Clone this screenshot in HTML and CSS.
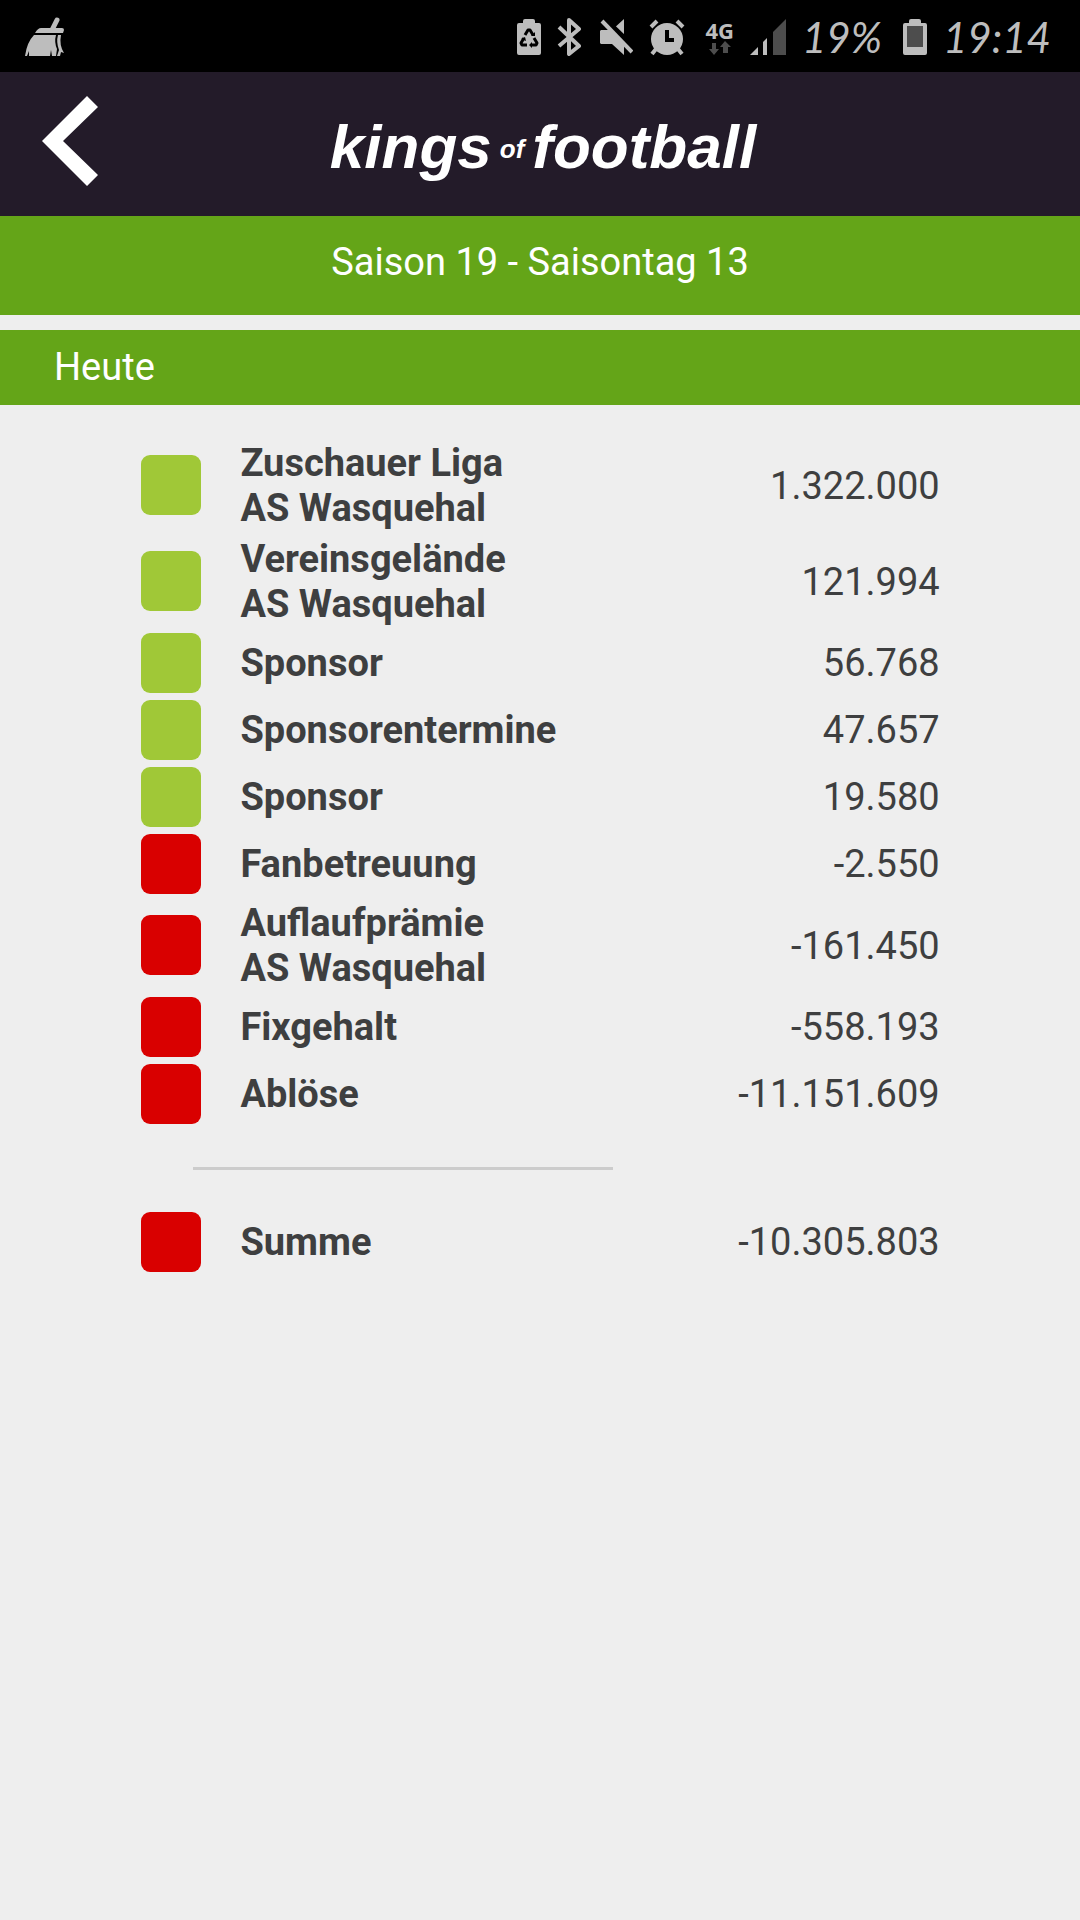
FILE: index.html
```
<!DOCTYPE html>
<html lang="de">

<head>
    <meta charset="utf-8">
    <meta name="viewport" content="width=device-width, initial-scale=1.0">
    <title>Kings of Football</title>
    <link rel="stylesheet" href="styles.css">
</head>

<body>
    <div class="statusbar">
        <svg class="broom" width="40" height="40" viewBox="0 0 40 40">
            <path d="M32 3 L27 13" stroke="#bdbdbd" stroke-width="5" stroke-linecap="round" />
            <path d="M10 16 Q13 11 16 11 H37 Q39 11 39 13 L38 16 Z" fill="#bdbdbd" />
            <path d="M9 18 H31 Q29 25 32 32 L31 39 H27 L26 33 L25 39 H4 V34 L2 39 H0 Q2 25 9 18 Z M33 18 H36 Q34 28 39 36 L36 35 L35 39 H32 L34 33 Q31 25 33 18 Z" fill="#bdbdbd" />
        </svg>
        <div class="symbole">
            <svg width="24" height="36" viewBox="0 0 24 36">
                <path d="M6 4 V2 Q6 0 8 0 H16 Q18 0 18 2 V4 H22 Q24 4 24 6 V34 Q24 36 22 36 H2 Q0 36 0 34 V6 Q0 4 2 4 Z" fill="#bdbdbd" />
                <g fill="none" stroke="#000" stroke-width="3" stroke-linejoin="round">
                    <path d="M8 16 L11 11 H13 L16 16" />
                    <path d="M7 19 L4 24 L5 26 H10" />
                    <path d="M17 19 L20 24 L19 26 H14" />
                </g>
                <path d="M14 17 H18 V13 Z M4 20 L8 18 L9 22 Z M15 23 V29 L12 26 Z" fill="#000" />
            </svg>
            <svg width="24" height="38" viewBox="0 0 24 38">
                <path d="M2 9 L22 28 L12 36 V2 L22 11 L2 28" fill="none" stroke="#bdbdbd" stroke-width="4" stroke-linejoin="round" />
            </svg>
            <svg class="stumm" width="33" height="38" viewBox="0 0 33 38">
                <path d="M1 12 H12 L24 1 V37 L12 26 H1 L0 25 V13 Z" fill="#bdbdbd" />
                <path d="M3 0 L34 30" stroke="#000" stroke-width="6" />
                <path d="M2 3 L32 34" stroke="#bdbdbd" stroke-width="4" />
            </svg>
            <svg class="wecker" width="36" height="38" viewBox="0 0 36 38">
                <circle cx="18" cy="21" r="16" fill="#bdbdbd" />
                <path d="M2 9 L8 3 M28 3 L34 9 M7 31 L3 36 M29 31 L33 36" stroke="#bdbdbd" stroke-width="4" />
                <path d="M18 12 V22 H25" fill="none" stroke="#000" stroke-width="4" />
            </svg>
            <div class="netz">
                <span>4G</span>
                <svg width="24" height="14" viewBox="0 0 24 14">
                    <path d="M4 2 H8 V8 H11 L6 14 L1 8 H4 Z M15 12 H20 V6 H23 L17 0 L12 6 H15 Z" fill="#4d4d4d" />
                </svg>
            </div>
            <svg class="signal" width="36" height="36" viewBox="0 0 36 36">
                <path d="M0 36 L8 28 V36 Z M13 36 V23 L17 19 V36 Z" fill="#bdbdbd" />
                <path d="M23 36 V13 L36 0 V36 Z" fill="#4d4d4d" />
            </svg>
            <span class="hand akku">19%</span>
            <svg width="24" height="36" viewBox="0 0 24 36">
                <path d="M6 4 V2 Q6 0 8 0 H16 Q18 0 18 2 V4 H22 Q24 4 24 6 V34 Q24 36 22 36 H2 Q0 36 0 34 V6 Q0 4 2 4 Z" fill="#bdbdbd" />
                <path d="M4 7 H20 V28 H4 Z" fill="#4d4d4d" />
            </svg>
            <time class="hand uhr">19:14</time>
        </div>
    </div>

    <header>
        <button class="zurueck" aria-label="Zurück">
            <svg width="56" height="90" viewBox="0 0 56 90">
                <path d="M45 0 L56 11 L21 45 L56 79 L45 90 L0 45 Z" fill="#fff" />
            </svg>
        </button>
        <h1>kings<small>of</small>football</h1>
    </header>

    <main>
        <h2 class="saison">Saison 19 - Saisontag 13</h2>
        <h3 class="tag">Heute</h3>

        <section class="finanzen">
            <table>
                <tbody>
                    <tr>
                        <td class="farbe"><span class="plus"></span></td>
                        <th scope="row">Zuschauer Liga<br>AS Wasquehal</th>
                        <td class="betrag">1.322.000</td>
                    </tr>
                    <tr>
                        <td class="farbe"><span class="plus"></span></td>
                        <th scope="row">Vereinsgelände<br>AS Wasquehal</th>
                        <td class="betrag">121.994</td>
                    </tr>
                    <tr>
                        <td class="farbe"><span class="plus"></span></td>
                        <th scope="row">Sponsor</th>
                        <td class="betrag">56.768</td>
                    </tr>
                    <tr>
                        <td class="farbe"><span class="plus"></span></td>
                        <th scope="row">Sponsorentermine</th>
                        <td class="betrag">47.657</td>
                    </tr>
                    <tr>
                        <td class="farbe"><span class="plus"></span></td>
                        <th scope="row">Sponsor</th>
                        <td class="betrag">19.580</td>
                    </tr>
                    <tr>
                        <td class="farbe"><span class="minus"></span></td>
                        <th scope="row">Fanbetreuung</th>
                        <td class="betrag">-2.550</td>
                    </tr>
                    <tr>
                        <td class="farbe"><span class="minus"></span></td>
                        <th scope="row">Auflaufprämie<br>AS Wasquehal</th>
                        <td class="betrag">-161.450</td>
                    </tr>
                    <tr>
                        <td class="farbe"><span class="minus"></span></td>
                        <th scope="row">Fixgehalt</th>
                        <td class="betrag">-558.193</td>
                    </tr>
                    <tr>
                        <td class="farbe"><span class="minus"></span></td>
                        <th scope="row">Ablöse</th>
                        <td class="betrag">-11.151.609</td>
                    </tr>
                </tbody>
                <tfoot>
                    <tr>
                        <td class="linie" colspan="3"><hr></td>
                    </tr>
                    <tr>
                        <td class="farbe"><span class="minus"></span></td>
                        <th scope="row">Summe</th>
                        <td class="betrag">-10.305.803</td>
                    </tr>
                </tfoot>
            </table>
        </section>
    </main>
</body>

</html>
```
FILE: styles.css
```
* {
    box-sizing: border-box;
}

body {
    margin: 0;
    background-color: #eeeeee;
    color: #3e3f40;
    font-family: Roboto, sans-serif;
    font-size: 38px;
    line-height: 45px;
}

svg {
    display: block;
    flex: none;
}

/* statusbar */
.statusbar {
    display: flex;
    justify-content: space-between;
    align-items: center;
    height: 72px;
    padding: 2px 28px 0 25px;
    background-color: #000000;
    color: #bdbdbd;
}

.symbole {
    display: flex;
    align-items: center;
    gap: 16px;
}

.stumm {
    margin-left: 3px;
}

.wecker {
    margin-right: 4px;
}

.netz {
    display: flex;
    flex-direction: column;
    align-items: center;
    font-family: "Open Sans", sans-serif;
    font-size: 22px;
    font-weight: 700;
    line-height: 22px;
}

.hand {
    font-family: Lato, sans-serif;
    font-style: italic;
    font-size: 42px;
}

.akku {
    width: 85px;
}

.uhr {
    width: 109px;
}

/* kopf */
header {
    display: grid;
    grid-template-columns: 1fr auto 1fr;
    align-items: center;
    height: 144px;
    background-color: #231b29;
    color: #ffffff;
}

.zurueck {
    justify-self: start;
    margin: 0 0 6px 42px;
    padding: 0;
    border: none;
    background: none;
    cursor: pointer;
}

h1 {
    margin: 6px 0 0 6px;
    font-family: "Liberation Sans", Arial, sans-serif;
    font-size: 62px;
    font-style: italic;
    line-height: 72px;
}

h1 small {
    margin: 0 8px;
    font-size: 26px;
    vertical-align: 10px;
    line-height: 26px;
}

/* balken */
.saison,
.tag {
    margin: 0;
    background-color: #64a518;
    color: #ffffff;
    font-size: 38px;
    font-weight: 400;
}

.saison {
    padding: 24px 0 30px;
    text-align: center;
}

.tag {
    margin-top: 15px;
    padding: 15px 54px;
}

/* liste */
.finanzen {
    padding: 32px 13%;
}

table {
    width: 100%;
    border-collapse: collapse;
}

td,
th {
    height: 67px;
    padding: 4px 0 2px;
    text-align: left;
    vertical-align: middle;
}

.farbe {
    width: 100px;
    padding: 3px 0 3px 1px;
}

.farbe span {
    display: block;
    width: 60px;
    height: 60px;
    border-radius: 9px;
}

.plus {
    background-color: #a0c837;
}

.minus {
    background-color: #d90000;
}

.betrag {
    text-align: right;
}

.linie {
    height: 81px;
}

hr {
    width: 420px;
    max-width: 80%;
    height: 3px;
    margin: 0 0 0 53px;
    border: none;
    background-color: #cccccc;
}
```
